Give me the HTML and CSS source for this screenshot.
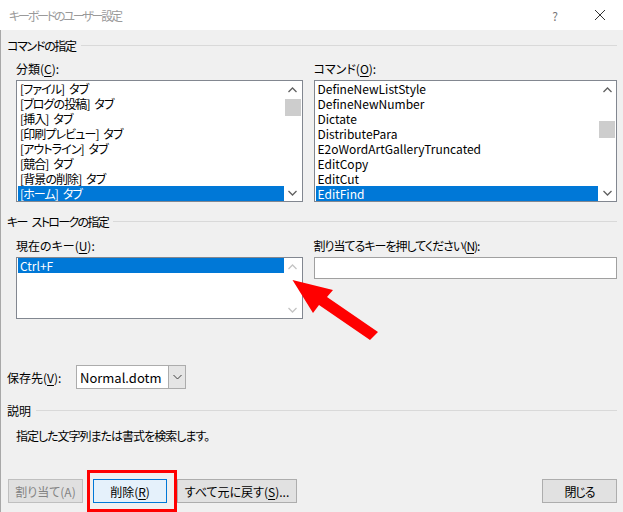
FILE: index.html
```html
<!DOCTYPE html>
<html lang="ja">
<head>
<meta charset="utf-8">
<title>キーボードのユーザー設定</title>
<link rel="stylesheet" href="styles.css">
</head>
<body>
<div class="window">
  <div class="titlebar">
    <span class="title">キーボードのユーザー設定</span>
    <span class="help">?</span>
    <span class="close"><svg width="12" height="12" viewBox="0 0 12 12"><path d="M1 1 L11 11 M11 1 L1 11" stroke="#333" stroke-width="1" fill="none"/></svg></span>
  </div>
  <div class="content">
    <div class="group-head g1"><span class="gh-text tight-a">コマンドの指定</span></div>
    <div class="cols cmd">
      <div class="col col-left">
        <div class="label">分類(<u>C</u>):</div>
        <div class="listbox tall">
          <ul class="items jp">
            <li>[ファイル] タブ</li>
            <li>[ブログの投稿] タブ</li>
            <li>[挿入] タブ</li>
            <li>[印刷プレビュー] タブ</li>
            <li>[アウトライン] タブ</li>
            <li>[競合] タブ</li>
            <li>[背景の削除] タブ</li>
            <li class="sel">[ホーム] タブ</li>
          </ul>
          <div class="vscroll">
            <div class="arrow"><svg width="9" height="6" viewBox="0 0 9 6"><path d="M0.5 5 L4.5 1 L8.5 5" stroke="#606060" stroke-width="1.3" fill="none"/></svg></div>
            <div class="track"><div class="thumb thumb-a"></div></div>
            <div class="arrow"><svg width="9" height="6" viewBox="0 0 9 6"><path d="M0.5 1 L4.5 5 L8.5 1" stroke="#606060" stroke-width="1.3" fill="none"/></svg></div>
          </div>
        </div>
      </div>
      <div class="col col-right">
        <div class="label">コマンド(<u>O</u>):</div>
        <div class="listbox tall">
          <ul class="items">
            <li>DefineNewListStyle</li>
            <li>DefineNewNumber</li>
            <li>Dictate</li>
            <li>DistributePara</li>
            <li>E2oWordArtGalleryTruncated</li>
            <li>EditCopy</li>
            <li>EditCut</li>
            <li class="sel">EditFind</li>
          </ul>
          <div class="vscroll">
            <div class="arrow"><svg width="9" height="6" viewBox="0 0 9 6"><path d="M0.5 5 L4.5 1 L8.5 5" stroke="#606060" stroke-width="1.3" fill="none"/></svg></div>
            <div class="track"><div class="thumb thumb-b"></div></div>
            <div class="arrow"><svg width="9" height="6" viewBox="0 0 9 6"><path d="M0.5 1 L4.5 5 L8.5 1" stroke="#606060" stroke-width="1.3" fill="none"/></svg></div>
          </div>
        </div>
      </div>
    </div>

    <div class="group-head g2"><span class="gh-text tight-b">キー ストロークの指定</span></div>
    <div class="cols keys">
      <div class="col col-left">
        <div class="label">現在のキー(<u>U</u>):</div>
        <div class="listbox short">
          <ul class="items">
            <li class="sel">Ctrl+F</li>
          </ul>
          <div class="vscroll disabled">
            <div class="arrow"><svg width="9" height="6" viewBox="0 0 9 6"><path d="M0.5 5 L4.5 1 L8.5 5" stroke="#c4c4c4" stroke-width="1.3" fill="none"/></svg></div>
            <div class="track"></div>
            <div class="arrow"><svg width="9" height="6" viewBox="0 0 9 6"><path d="M0.5 1 L4.5 5 L8.5 1" stroke="#c4c4c4" stroke-width="1.3" fill="none"/></svg></div>
          </div>
        </div>
      </div>
      <div class="col col-right">
        <div class="label tight-c">割り当てるキーを押してください(<u>N</u>):</div>
        <div class="textbox"></div>
      </div>
    </div>

    <div class="saveto">
      <span class="save-label">保存先(<u>V</u>):</span>
      <div class="combo">
        <span class="combo-text">Normal.dotm</span>
        <span class="combo-btn"><svg width="9" height="6" viewBox="0 0 9 6"><path d="M0.5 1 L4.5 5 L8.5 1" stroke="#404040" stroke-width="1" fill="none"/></svg></span>
      </div>
    </div>

    <div class="group-head g3"><span class="gh-text">説明</span></div>
    <div class="desc tight-c">指定した文字列または書式を検索します。</div>

    <div class="buttons">
      <button class="btn disabled b1">割り当て(A)</button>
      <button class="btn focused b2">削除(<u>R</u>)</button>
      <button class="btn b3">すべて元に戻す(<u>S</u>)...</button>
      <button class="btn b4">閉じる</button>
    </div>
  </div>

  <div class="annot-rect"></div>
  <svg class="annot-arrow" width="623" height="512" viewBox="0 0 623 512">
    <polygon points="292.5,280 333,290 327,297 378,332 370,340 319,305 313,313" fill="#ff0000"/>
  </svg>
</div>
</body>
</html>
```

FILE: styles.css
```css
* { box-sizing: border-box; }
html, body { margin: 0; padding: 0; }
body {
  width: 623px;
  height: 512px;
  overflow: hidden;
  background: #f0f0f0;
  font-family: "Noto Sans CJK JP", "Noto Sans", sans-serif;
  font-size: 12px;
  font-feature-settings: "palt" 1;
  color: #000;
}
.window {
  position: relative;
  width: 623px;
  height: 512px;
}
.titlebar {
  height: 30px;
  background: #fff;
  display: flex;
  align-items: center;
  padding-left: 9px;
}
.title {
  color: #9a9a9a;
  font-size: 12px;
  letter-spacing: -2.2px;
  line-height: 15px;
  flex: 1;
}
.help {
  color: #777;
  font-size: 12px;
  width: 12px;
  margin-right: 33px;
  text-align: center;
}
.close {
  width: 12px;
  height: 12px;
  margin-right: 17px;
  display: flex;
}
.content {
  height: 482px;
  border-left: 1px solid #a8a8a8;
  display: flex;
  flex-direction: column;
}
.group-head {
  height: 15px;
  display: flex;
  align-items: center;
  padding-left: 6px;
  padding-right: 6px;
  line-height: 15px;
}
.group-head::after {
  content: "";
  flex: 1;
  height: 1px;
  background: #d9d9d9;
  margin-left: 5px;
}
.tight-a { letter-spacing: -1.3px; }
.tight-b { letter-spacing: -1.7px; word-spacing: 4px; }
.tight-c { letter-spacing: -1px; }
.g1 { margin-top: 8px; }
.g2 { margin-top: 12px; }
.g3 { margin-top: 14px; }

.cols {
  display: flex;
  padding-left: 15px;
  padding-right: 6px;
  gap: 11px;
}
.cmd { margin-top: 8px; }
.keys { margin-top: 9px; }
.col { display: flex; flex-direction: column; }
.col-left { width: 287px; }
.col-right { width: 304px; }
.label {
  height: 15px;
  line-height: 15px;
  margin-bottom: 4px;
  white-space: nowrap;
}
u { text-decoration: underline; text-underline-offset: 2px; }

.listbox {
  display: flex;
  background: #fff;
  border: 1px solid #828790;
}
.listbox.tall { height: 122px; }
.listbox.short { height: 62px; }
.items {
  list-style: none;
  margin: 0;
  padding: 0 1px;
  flex: 1;
}
.items.jp { letter-spacing: -0.9px; word-spacing: 3px; }
.items li {
  height: 15px;
  line-height: 15px;
  padding-left: 2px;
  white-space: nowrap;
}
.items li.sel {
  background: #0078d7;
  color: #fff;
}
.vscroll {
  width: 16px;
  margin-right: 1px;
  display: flex;
  flex-direction: column;
}
.vscroll .arrow {
  height: 17px;
  display: flex;
  align-items: center;
  justify-content: center;
}
.vscroll .track {
  flex: 1;
}
.thumb {
  background: #cdcdcd;
  height: 17px;
}
.thumb-a { margin-top: 1px; }
.thumb-b { margin-top: 23px; }

.textbox {
  height: 22px;
  background: #fff;
  border: 1px solid #a0a0a0;
}

.saveto {
  margin-top: 46px;
  height: 24px;
  display: flex;
  align-items: center;
  padding-left: 6px;
}
.save-label {
  width: 69px;
  line-height: 15px;
}
.combo {
  width: 110px;
  height: 24px;
  background: #fff;
  border: 1px solid #acacac;
  display: flex;
  align-items: center;
}
.combo-text {
  flex: 1;
  padding-left: 3px;
  font-size: 13px;
  line-height: 15px;
}
.combo-btn {
  width: 17px;
  height: 22px;
  background: #e5e5e5;
  border-left: 1px solid #acacac;
  display: flex;
  align-items: center;
  justify-content: center;
}

.desc {
  margin-top: 10px;
  height: 15px;
  line-height: 15px;
  padding-left: 15px;
}

.buttons {
  margin-top: 36px;
  height: 24px;
  display: flex;
  padding-left: 7px;
  padding-right: 6px;
  gap: 10px;
}
.btn {
  height: 24px;
  font-family: inherit;
  font-size: 12px;
  font-feature-settings: "palt" 1;
  line-height: 15px;
  background: #e1e1e1;
  border: 1px solid #adadad;
  color: #000;
  padding: 0;
}
.b1 { width: 75px; }
.b2 { width: 74px; }
.b3 { width: 120px; }
.b4 { width: 75px; margin-left: auto; letter-spacing: -1px; }
.btn.disabled {
  color: #838383;
  background: #e0e0e0;
  border-color: #bfbfbf;
}
.btn.focused {
  background: #e5f1fb;
  border-color: #0078d7;
}

.annot-rect {
  position: absolute;
  left: 87px;
  top: 470px;
  width: 90px;
  height: 42px;
  border: 3px solid #ff0000;
}
.annot-arrow {
  position: absolute;
  left: 0;
  top: 0;
  pointer-events: none;
}
```
